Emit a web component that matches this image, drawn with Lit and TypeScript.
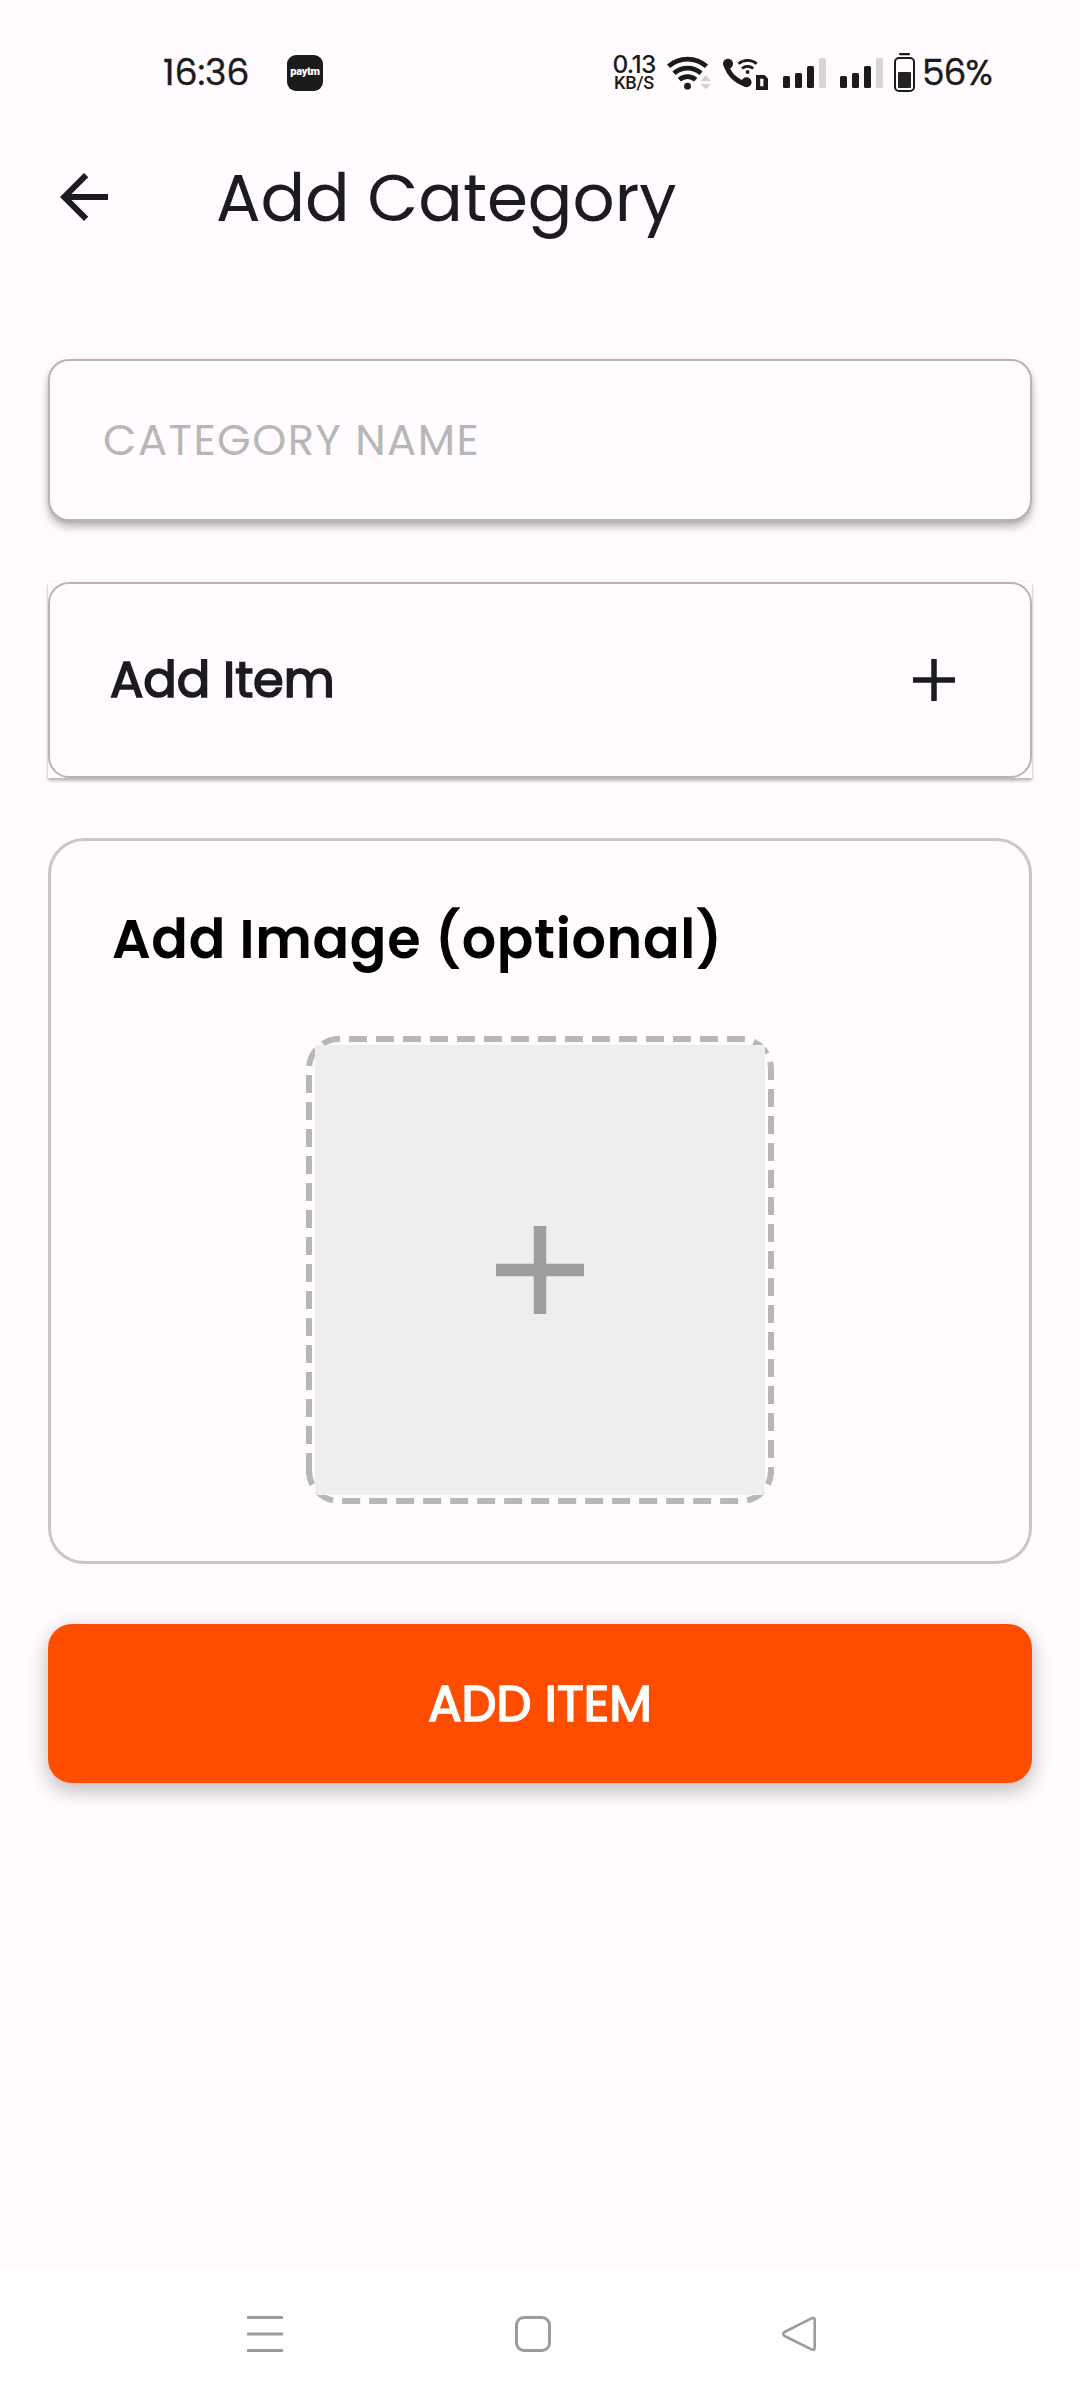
import { LitElement, html, css, svg } from "lit";
import { customElement, property } from "lit/decorators.js";

@customElement("signal-bars")
class SignalBars extends LitElement {
  static styles = css`
    :host { display: block; width: 43px; height: 30px; }
    svg { display: block; }
  `;
  render() {
    const bars = [
      { x: 0, h: 12 },
      { x: 12, h: 15 },
      { x: 24, h: 22 },
      { x: 36, h: 30 },
    ];
    return html`<svg width="43" height="30" viewBox="0 0 43 30">
      ${bars.map((b, i) => svg`<rect x=${b.x} y=${30 - b.h} width="7" height=${b.h} rx="1.5" fill=${i === 3 ? "#d7d5d8" : "#1b1b1b"} />`)}
    </svg>`;
  }
}

@customElement("status-bar")
class StatusBar extends LitElement {
  static styles = css`
    :host { display: flex; align-items: center; height: 145px; padding: 0 88px 0 163px; box-sizing: border-box; color: #1b1b1b; }
    svg { display: block; }
    .time { width: 124px; font-size: 36.500px; letter-spacing: -0.2px; -webkit-text-stroke: 0.300px currentColor; }
    .app { width: 36px; height: 36px; border-radius: 9px; background: #1b1b1b; color: #fff; font-family: Roboto, sans-serif; font-size: 11px; font-weight: 900; letter-spacing: -0.3px; line-height: 34px; text-align: center; }
    .icons { display: flex; align-items: center; margin-left: auto; }
    .speed { display: flex; flex-direction: column; align-items: center; width: 46px; margin-right: 10px; font-family: Inter, sans-serif; font-weight: 500; white-space: nowrap; }
    .rate { font-size: 24.500px; line-height: 20px; letter-spacing: -0.700px; }
    .unit { font-family: Roboto, sans-serif; font-size: 18px; line-height: 18px; letter-spacing: -0.2px; }
    .wifi { margin: 0 11px 1px 0; }
    .call { margin-right: 14px; }
    .first { margin-right: 14px; }
    .second { margin-right: 11px; }
    .level { width: 70px; margin-left: 7px; font-size: 36px; letter-spacing: -1px; -webkit-text-stroke: 0.300px currentColor; }
  `;
  render() {
    return html`
      <div class="time">16:36</div>
      <div class="app">paytm</div>
      <div class="icons">
        <div class="speed"><span class="rate">0.13</span><span class="unit">KB/S</span></div>
        <svg class="wifi" width="45" height="37" viewBox="0 0 45 37">
          <g fill="none" stroke="#1b1b1b" stroke-width="4.8">
            <path d="M1.500 12.300a28.500 28.500 0 0 1 38 0" />
            <path d="M7 19.300a20 20 0 0 1 27 0" />
            <path d="M12.300 25.800a12.300 12.300 0 0 1 16.400 0" />
          </g>
          <circle cx="20.500" cy="32.200" r="3.400" fill="#1b1b1b" />
          <path d="M33.500 27l5.200-6 5.200 6zM33.500 30l5.200 5.500 5.200-5.500z" fill="#d2d0d3" />
        </svg>
        <svg class="call" width="46" height="34" viewBox="0 0 46 34">
          <path d="M3 8Q5 17 12 22.500T24 28" fill="none" stroke="#1b1b1b" stroke-width="5" />
          <circle cx="5" cy="7.800" r="5" fill="#1b1b1b" />
          <circle cx="23.500" cy="26.200" r="5" fill="#1b1b1b" />
          <g fill="none" stroke="#1b1b1b" stroke-width="2.800">
            <path d="M15.500 7.800a14 14 0 0 1 18.200 0" />
            <path d="M19 12.500a8.500 8.500 0 0 1 11.200 0" />
          </g>
          <circle cx="24.600" cy="16" r="1.900" fill="#1b1b1b" />
          <path d="M33 19h8.500l3.500 3.500V34H33z M37.200 22.700v7.600h3.200v-7.600z" fill="#1b1b1b" fill-rule="evenodd" />
        </svg>
        <signal-bars class="first"></signal-bars>
        <signal-bars class="second"></signal-bars>
        <svg width="21" height="40" viewBox="0 0 21 40">
          <rect x="5" y="0" width="11" height="2.200" rx="1" fill="#1b1b1b" />
          <rect x="1" y="5" width="19" height="33" rx="4" fill="none" stroke="#1b1b1b" stroke-width="2" />
          <rect x="4" y="19" width="13" height="16" rx="1" fill="#222" />
        </svg>
        <div class="level">56%</div>
      </div>
    `;
  }
}

@customElement("plus-icon")
class PlusIcon extends LitElement {
  @property({ type: Number }) size = 42;
  @property({ type: Number }) weight = 5.5;
  static styles = css`
    :host { display: block; }
    svg { display: block; }
  `;
  render() {
    const s = this.size;
    return html`<svg width=${s} height=${s} viewBox="0 0 ${s} ${s}">
      <path d="M${s / 2} 0V${s}M0 ${s / 2}H${s}" stroke="currentColor" stroke-width=${this.weight} />
    </svg>`;
  }
}

@customElement("nav-bar")
class NavBar extends LitElement {
  static styles = css`
    :host { display: flex; gap: 232px; height: 132px; padding: 48px 0 0 247px; box-sizing: border-box; background: #fff; }
    svg { display: block; }
    .back { margin-left: -2px; }
  `;
  render() {
    return html`
      <svg width="36" height="36" viewBox="0 0 36 36"><path d="M0 1.500H36M0 18H36M0 34.500H36" stroke="#9c9c9c" stroke-width="3" /></svg>
      <svg width="36" height="36" viewBox="0 0 36 36"><rect x="1.500" y="1.500" width="33" height="33" rx="7.500" fill="none" stroke="#9c9c9c" stroke-width="3" /></svg>
      <svg class="back" width="36" height="36" viewBox="0 0 36 36"><path d="M31 2.200L3.500 16q-2.500 2 0 4L31 33.600q2.700 .8 2.700-1.600V3.800q0-2.400-2.700-1.600z" fill="none" stroke="#9c9c9c" stroke-width="2.600" stroke-linejoin="round" /></svg>
    `;
  }
}

@customElement("app-root")
class AppRoot extends LitElement {
  static styles = css`
    :host { display: flex; flex-direction: column; width: 1080px; height: 2400px; overflow: hidden; background: #fffbff; color: #1c1b1f; font-family: Poppins, Inter, "Open Sans", sans-serif; font-feature-settings: "cv11"; }
    * { box-sizing: border-box; }
    svg { display: block; }
    header { display: flex; align-items: center; height: 106px; padding-left: 48px; }
    .arrow { margin-bottom: 2px; }
    h1 { margin: 0 0 0 96px; font-size: 66px; font-weight: 400; line-height: 106px; white-space: nowrap; }
    main { display: flex; flex: 1; flex-direction: column; padding: 108px 48px 0; }
    .field { display: flex; align-items: center; height: 162px; margin: 0 0 61px; padding-left: 53px; border: 2px solid #b5b5b5; border-radius: 21px; background: #fffbff; box-shadow: 0 6px 9px rgba(0, 0, 0, 0.28), 0 1px 3px rgba(0, 0, 0, 0.1); color: #b7b7b7; font-size: 43.300px; letter-spacing: 1.450px; }
    .item-wrap { height: 196px; margin-bottom: 60px; background: #fffbff; box-shadow: 0 3px 3px rgba(0, 0, 0, 0.26), 0 0 2px rgba(0, 0, 0, 0.1); }
    .item { display: flex; align-items: center; justify-content: space-between; height: 196px; padding: 0 75px 0 60px; border: 2px solid #b5b5b5; border-radius: 21px; font-size: 49.500px; letter-spacing: -0.100px; -webkit-text-stroke: 1.700px currentColor; }
    .picture { display: flex; flex-direction: column; align-items: center; height: 726px; margin-bottom: 60px; border: 3px solid #c8c8c8; border-radius: 36px; }
    h2 { align-self: flex-start; margin: 68px 0 0 61px; font-size: 54px; font-weight: 600; line-height: 60px; letter-spacing: 0.700px; color: #000; white-space: nowrap; }
    .drop { display: grid; place-items: center; width: 468px; height: 468px; margin-top: 67px; color: #9e9e9e; }
    .drop > * { grid-area: 1 / 1; }
    .tile { display: grid; place-items: center; width: 450px; height: 450px; background: #eee; }
    .submit { height: 159px; border: 0; border-radius: 24px; background: #ff4d00; box-shadow: 0 9px 20px rgba(0, 0, 0, 0.18), 0 3px 22px rgba(0, 0, 0, 0.1); color: #fff; font: inherit; font-size: 49.500px; -webkit-text-stroke: 1.700px currentColor; }
  `;
  render() {
    return html`
      <status-bar></status-bar>
      <header>
        <svg class="arrow" width="72" height="72" viewBox="0 0 24 24"><path fill="#1c1b1f" d="m12 20-8-8 8-8 1.425 1.400L7.825 11H20v2H7.825l5.600 5.600z" /></svg>
        <h1>Add Category</h1>
      </header>
      <main>
        <div class="field">CATEGORY NAME</div>
        <div class="item-wrap">
          <div class="item"><span>Add Item</span><plus-icon></plus-icon></div>
        </div>
        <section class="picture">
          <h2>Add Image (optional)</h2>
          <div class="drop">
            <svg width="468" height="468" viewBox="0 0 468 468">
              <path d="M3 435V33a30 30 0 0 1 30-30H435a30 30 0 0 1 30 30V435a30 30 0 0 1-30 30H33a30 30 0 0 1-30-30" fill="none" stroke="#b7b7b7" stroke-width="6" stroke-dasharray="18 9" />
            </svg>
            <div class="tile"><plus-icon size="88" weight="12.5"></plus-icon></div>
          </div>
        </section>
        <button class="submit">ADD ITEM</button>
      </main>
      <nav-bar></nav-bar>
    `;
  }
}
